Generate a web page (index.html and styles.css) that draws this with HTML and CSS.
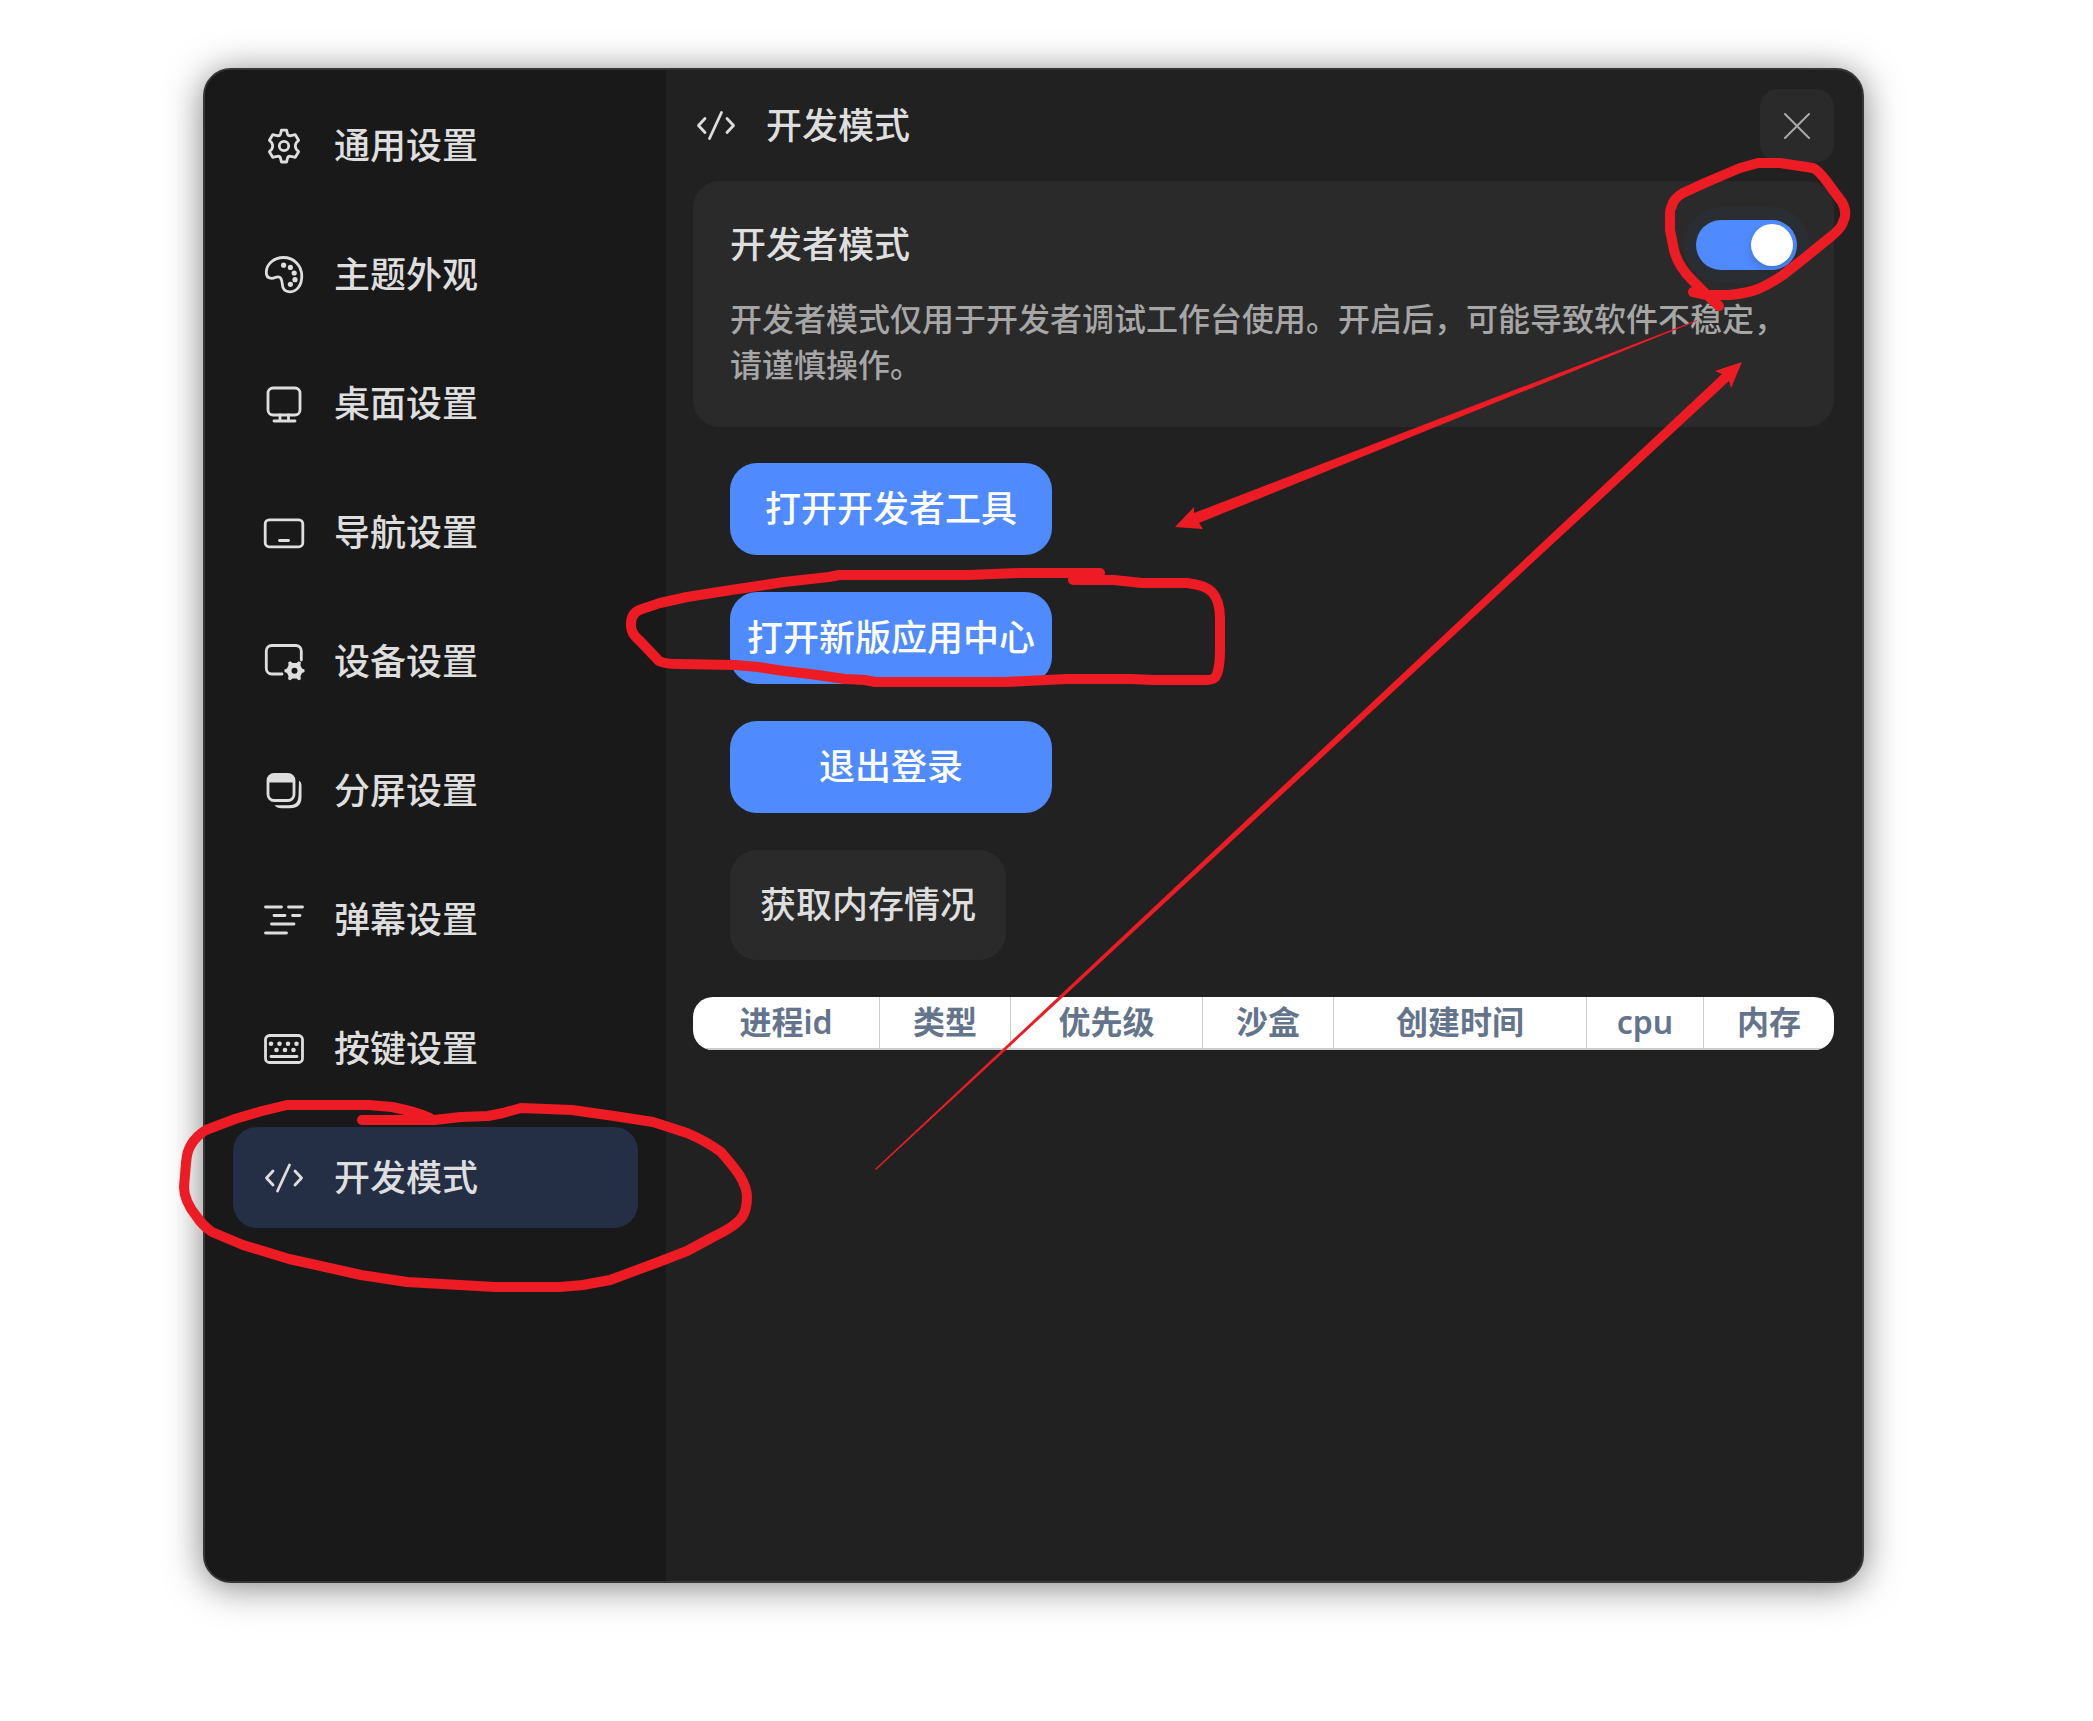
FILE: index.html
```html
<!DOCTYPE html>
<html lang="zh-CN">
<head>
<meta charset="utf-8">
<title>开发模式</title>
<link rel="stylesheet" href="styles.css">
</head>
<body>
<div class="page">
  <div class="window">
    <nav class="sidebar">
      <a class="nav-item" href="#general">
        <svg class="icon" viewBox="0 0 40 40"><path d="M16.6 7.6 17.4 4.2H22.6L23.4 7.6Q24.2 10.4 27 9.6L31.3 8.700 34.600 14.200 32.200 16.900Q30.400 20 32.200 23.100L34.600 25.800 31.300 31.300 27 30.400Q24.200 29.600 23.400 32.400L22.600 36H17.400L16.600 32.400Q15.800 29.600 13 30.400L8.700 31.300 5.400 25.800 7.800 23.100Q9.600 20 7.800 16.900L5.400 14.200 8.700 8.700 13 9.600Q15.800 10.400 16.600 7.600Z"/><circle cx="20" cy="20" r="4.700"/></svg>
        <span>通用设置</span>
      </a>
      <a class="nav-item" href="#theme">
        <svg class="icon" viewBox="0 0 40 40"><path d="M2.300 17C2.500 9 10 2.500 19.500 2.500 30 2.500 37.800 11 37.800 21 37.800 30 33 36.800 26 36.800 21 36.800 18.500 33.500 18.300 29 18 25 17.500 21.800 14 21.800 11.500 21.800 10.500 23.500 7.500 23.300 4 23 2.100 20.500 2.300 17Z"/><g class="solid"><circle cx="19.600" cy="10.200" r="2.600"/><circle cx="26.400" cy="12.400" r="2.600"/><circle cx="30.200" cy="18" r="2.600"/><circle cx="31" cy="24.700" r="2.600"/><circle cx="26.400" cy="29.300" r="2.600"/></g></svg>
        <span>主题外观</span>
      </a>
      <a class="nav-item" href="#desktop">
        <svg class="icon" viewBox="0 0 40 40"><rect x="4" y="4" width="32" height="27" rx="5"/><path d="M16 31v6M24.500 31v6M10 37h21"/></svg>
        <span>桌面设置</span>
      </a>
      <a class="nav-item" href="#navigation">
        <svg class="icon" viewBox="0 0 40 40"><rect x="1.200" y="6.800" width="37.600" height="27" rx="4"/><path d="M15.500 27.500h9"/></svg>
        <span>导航设置</span>
      </a>
      <a class="nav-item" href="#device">
        <svg class="icon" viewBox="0 0 40 40"><path d="M37.300 18V9a5.500 5.500 0 0 0-5.500-5.500H7.800A5.500 5.500 0 0 0 2.300 9v17.500a5.500 5.500 0 0 0 5.500 5.500H18"/><path class="solid" fill-rule="evenodd" d="M24.300 20.200 26.300 19.200 28.500 21H32.500L34.700 19.200 36.900 20.300 36.500 23.500 38 26.500 40.500 27.500V30L38 31 36.500 34 36.900 37.200 34.700 38.300 32.500 36.500H28.500L26.300 38.300 24.100 37.200 24.500 34 23 31 20.500 30V27.500L23 26.500 24.500 23.500ZM30.500 25.800a3 3 0 1 0 0 6 3 3 0 0 0 0-6Z"/></svg>
        <span>设备设置</span>
      </a>
      <a class="nav-item" href="#split">
        <svg class="icon" viewBox="0 0 40 40"><rect x="4" y="3.500" width="26" height="26" rx="6"/><path class="solid" d="M3 11.500V9a6 6 0 0 1 6-6h16a6 6 0 0 1 6 6v2.500Z"/><path class="solid" d="M35 9.500Q37.500 11 37.500 14V26Q37.500 37.300 26 37.300H18Q12.500 37.300 10.500 34.300H25Q34.500 34.300 34.500 25Z"/></svg>
        <span>分屏设置</span>
      </a>
      <a class="nav-item" href="#danmaku">
        <svg class="icon" viewBox="0 0 40 40"><path d="M1.500 7h16M24.500 7h14M10 15.500h11M28.500 15.500h7.500M7.500 24h22.500M1.500 33h21"/></svg>
        <span>弹幕设置</span>
      </a>
      <a class="nav-item" href="#keys">
        <svg class="icon" viewBox="0 0 40 40"><rect x="1.500" y="6.500" width="37" height="27" rx="4"/><path d="M7 27.500h26"/><g class="solid"><circle cx="7" cy="14.700" r="2.300"/><circle cx="15.500" cy="14.700" r="2.300"/><circle cx="24" cy="14.700" r="2.300"/><circle cx="32.500" cy="14.700" r="2.300"/><circle cx="12.500" cy="21" r="2.300"/><circle cx="21" cy="21" r="2.300"/><circle cx="29.500" cy="21" r="2.300"/></g></svg>
        <span>按键设置</span>
      </a>
      <a class="nav-item active" href="#developer" aria-current="page">
        <svg class="icon" viewBox="0 0 40 40"><path d="M9 13 2.500 20 9 27M31 13 37.500 20 31 27M25.500 7 13.500 33"/></svg>
        <span>开发模式</span>
      </a>
    </nav>
    <main class="content">
      <header class="header">
        <svg class="icon" viewBox="0 0 40 40"><path d="M9 12.500 2.500 19.500 9 26.500M31 12.500 37.500 19.500 31 26.500M25.500 6.500 13.500 32.500"/></svg>
        <h1 class="title">开发模式</h1>
        <button class="close" type="button" aria-label="关闭">
          <svg class="close-icon" viewBox="0 0 26 26"><path d="M1 1 25 25M25 1 1 25"/></svg>
        </button>
      </header>
      <section class="card">
        <div class="card-row">
          <label class="card-label" for="dev-mode">开发者模式</label>
          <input class="switch" id="dev-mode" type="checkbox" role="switch" checked>
        </div>
        <p class="description">开发者模式仅用于开发者调试工作台使用。开启后，可能导致软件不稳定，请谨慎操作。</p>
      </section>
      <div class="actions">
        <button class="button primary" type="button">打开开发者工具</button>
        <button class="button primary" type="button">打开新版应用中心</button>
        <button class="button primary" type="button">退出登录</button>
        <button class="button secondary" type="button">获取内存情况</button>
      </div>
      <table class="processes">
        <colgroup><col class="c-id"><col class="c-short"><col class="c-priority"><col class="c-short"><col class="c-time"><col class="c-cpu"><col class="c-short"></colgroup>
        <thead>
          <tr><th>进程id</th><th>类型</th><th>优先级</th><th>沙盒</th><th>创建时间</th><th>cpu</th><th>内存</th></tr>
        </thead>
      </table>
    </main>
  </div>
  <svg class="marks" viewBox="0 0 2093 1721" aria-hidden="true">
    <g class="strokes">
      <path d="M362 1120H434L461 1117 488 1116 503 1113 521 1108 572 1110 614 1116 653 1122 687 1133Q706 1141 721 1152 735 1168 740 1176 747 1188 747 1197 747 1210 742 1217 736 1226 713 1237L687 1251 656 1263 610 1280 583 1285 560 1287H495L407 1282 361 1275 289 1259 243 1245 212 1232Q202 1225 197 1217 184 1201 184 1187L186 1163Q187 1151 191 1145 196 1136 206 1130L235 1119 262 1111 287 1105H369L392 1107Q417 1112 430 1118"/>
      <path d="M1073 580H1114L1142 583H1187Q1205 585 1212 592 1220 601 1220 618V650Q1220 666 1217 674 1215 680 1207 680H1154L1130 679H1067L1005 682H875L865 680 845 679 810 674 784 671 758 667 735 665 679 664Q664 664 659 661L640 641Q630 633 631 624 631 612 642 609L660 603 687 597 731 590 758 586 784 582 829 577 839 575H968L1021 573H1100"/>
      <path d="M1693 292 1707 295H1730Q1748 293 1758 289 1770 284 1783 275L1807 256 1828 239Q1842 228 1843 222 1848 213 1842 202L1833 190Q1819 170 1813 168L1780 163H1758L1740 168 1707 182 1683 193Q1673 199 1672 206 1670 208 1670 215V230L1674 250Q1678 266 1692 280L1707 295 1719 306"/>
    </g>
    <path class="arrow" d="M1697 320 1194 513V507L1175 527 1203 529 1199 523 1697 321Z"/>
    <path class="arrow" d="M875 1169 1722 374 1715 371 1742 362 1731 388 1729 381 876 1170Z"/>
  </svg>
</div>
</body>
</html>
```
FILE: styles.css
```css
* {
  box-sizing: border-box;
}

body {
  margin: 0;
  background: #fff;
  color: #dedede;
  font: 500 36px/48px "Noto Sans", "Noto Sans CJK SC", sans-serif;
}

.page {
  position: relative;
  display: flex;
  min-height: 100vh;
  padding: 68px 229px 138px 203px;
}

.window {
  flex: 1;
  display: flex;
  overflow: hidden;
  border: 2px solid #363636;
  border-radius: 28px;
  background: #212121;
  box-shadow: 0 4px 36px rgba(0, 0, 0, 0.5);
}

.sidebar {
  display: flex;
  flex: none;
  flex-direction: column;
  gap: 28px;
  width: 461px;
  padding: 25px 28px;
  background: #191919;
}

.nav-item {
  display: flex;
  align-items: center;
  gap: 30px;
  height: 101px;
  padding: 0 31px;
  border-radius: 24px;
  color: inherit;
  text-decoration: none;
}

.nav-item.active {
  background: #242e45;
}

.icon {
  flex: none;
  width: 40px;
  height: 40px;
  overflow: visible;
  fill: none;
  stroke: #dedede;
  stroke-width: 2.8;
  stroke-linecap: round;
  stroke-linejoin: round;
}

.solid {
  fill: #dedede;
  stroke: none;
}

.content {
  flex: 1;
  min-width: 0;
  padding: 19px 28px 19px 27px;
}

.header {
  display: flex;
  align-items: center;
  gap: 30px;
  height: 73px;
  margin-bottom: 19px;
  padding-left: 3px;
}

.title {
  flex: 1;
  margin: 0;
  font-size: 36px;
  font-weight: 500;
}

.close {
  display: grid;
  place-items: center;
  width: 74px;
  height: 73px;
  padding: 0;
  border: 0;
  border-radius: 18px;
  background: #2a2a2a;
}

.close-icon {
  width: 26px;
  height: 26px;
  stroke: #a8a8a8;
  stroke-width: 2;
  stroke-linecap: round;
}

.card {
  padding: 36px 37px 39px;
  border-radius: 27px;
  background: #2a2a2a;
}

.card-row {
  display: flex;
  align-items: center;
  justify-content: space-between;
  height: 55px;
  margin-bottom: 24px;
}

.switch {
  appearance: none;
  display: flex;
  justify-content: flex-end;
  width: 101px;
  height: 50px;
  margin: 0;
  padding: 4px;
  border-radius: 25px;
  background: #4f8bff;
  box-shadow: 0 0 0 13px #2a2d31;
}

.switch::before {
  content: "";
  width: 42px;
  height: 42px;
  border-radius: 50%;
  background: #fff;
  box-shadow: 0 4px 8px rgba(0, 35, 11, 0.2);
}

.description {
  margin: 0;
  color: #a6a6a6;
  font-size: 32px;
  line-height: 46px;
}

.actions {
  display: flex;
  flex-direction: column;
  align-items: flex-start;
  gap: 37px;
  padding: 36px 37px 37px;
}

.button {
  border: 0;
  border-radius: 27px;
  font: inherit;
}

.primary {
  width: 322px;
  height: 92px;
  padding: 0;
  background: #4f8bff;
  color: #fff;
}

.secondary {
  height: 110px;
  padding: 0 30px;
  background: #2a2a2a;
  color: #dedede;
}

.processes {
  width: 100%;
  overflow: hidden;
  table-layout: fixed;
  border-spacing: 0;
  border-radius: 20px;
  background: #fff;
  color: #64748b;
  font-size: 32px;
  line-height: 50px;
}

.processes th {
  padding: 0 0 1px;
  border-bottom: 2px solid #ccc;
  font-weight: 600;
}

.processes th + th {
  border-left: 1px solid #ccc;
}

.c-id { width: 186px; }
.c-short { width: 131px; }
.c-priority { width: 192px; }
.c-time { width: 253px; }
.c-cpu { width: 117px; }

.marks {
  position: absolute;
  top: 0;
  left: 0;
  width: 100%;
  pointer-events: none;
}

.strokes {
  fill: none;
  stroke: #ed1c24;
  stroke-width: 10;
  stroke-linecap: round;
  stroke-linejoin: round;
}

.arrow {
  fill: #ed1c24;
}
```
